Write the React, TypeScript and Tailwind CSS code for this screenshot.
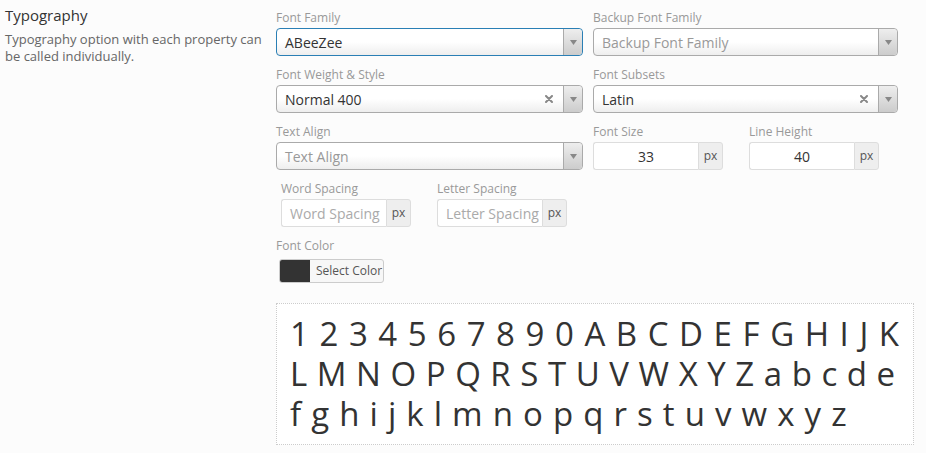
import React from "react";

const ui = { fontFamily: '"Open Sans", "Liberation Sans", sans-serif' };

function Arrow() {
  return (
    <div className="flex h-full w-[19px] items-center justify-center rounded-r-[4px] border-l border-[#aaa] bg-gradient-to-t from-[#ccc] to-[#eee]">
      <svg width="7" height="5" viewBox="0 0 7 5">
        <path d="M0 0 L7 0 L3.5 5 Z" fill="#888" />
      </svg>
    </div>
  );
}

function Clear() {
  return (
    <svg width="8" height="8" viewBox="0 0 8 8" className="mr-[10px]">
      <path d="M1 1 L7 7 M7 1 L1 7" stroke="#888" strokeWidth="2" strokeLinecap="round" />
    </svg>
  );
}

function Select({
  value,
  placeholder,
  clear,
  focus,
}: {
  value?: string;
  placeholder?: string;
  clear?: boolean;
  focus?: boolean;
}) {
  return (
    <div
      className={`flex h-[28px] items-center rounded-[4px] border bg-gradient-to-t from-[#eee] via-white via-50% to-white ${
        focus ? "border-[#2a7fb5]" : "border-[#aaa]"
      }`}
    >
      <div className={`flex-1 pl-[8px] text-[14px] ${value ? "text-[#333]" : "text-[#999]"}`}>
        {value ?? placeholder}
      </div>
      {clear && <Clear />}
      <Arrow />
    </div>
  );
}

function Label({ children, className = "" }: { children: React.ReactNode; className?: string }) {
  return <div className={`mb-[2px] h-[17px] text-[12px] leading-[17px] text-[#999] ${className}`}>{children}</div>;
}

function PxInput({ value, placeholder }: { value?: string; placeholder?: string }) {
  return (
    <div className="flex h-[28px] w-[130px]">
      <div
        className={`flex flex-1 items-center overflow-hidden whitespace-nowrap rounded-l-[3px] border border-r-0 border-[#ddd] bg-white text-[14px] ${
          value ? "justify-center text-[#333]" : "pl-[8px] text-[#aaa]"
        }`}
      >
        {value ?? placeholder}
      </div>
      <div className="flex w-[25px] items-center justify-center rounded-r-[3px] border border-[#ddd] bg-[#eee] text-[12px] text-[#555]">
        px
      </div>
    </div>
  );
}

export default function App() {
  return (
    <div className="min-h-[453px] w-[926px] bg-[#fcfcfc]" style={ui}>
      <div className="flex">
        <div className="w-[276px] pl-[5px] pt-[4px]">
          <div className="text-[15px] leading-[22px] text-[#333]">Typography</div>
          <div className="mt-[5px] w-[262px] text-[13px] leading-[17px] text-[#666]">
            Typography option with each property can be called individually.
          </div>
        </div>
        <div className="w-[638px] pt-[9px]">
          <div className="grid grid-cols-[307px_305px] gap-x-[10px] gap-y-[10px]">
            <div>
              <Label>Font Family</Label>
              <Select value="ABeeZee" focus />
            </div>
            <div>
              <Label>Backup Font Family</Label>
              <Select placeholder="Backup Font Family" />
            </div>
            <div>
              <Label>Font Weight &amp; Style</Label>
              <Select value="Normal 400" clear />
            </div>
            <div>
              <Label>Font Subsets</Label>
              <Select value="Latin" clear />
            </div>
            <div>
              <Label>Text Align</Label>
              <Select placeholder="Text Align" />
            </div>
            <div className="flex gap-[26px]">
              <div>
                <Label>Font Size</Label>
                <PxInput value="33" />
              </div>
              <div>
                <Label>Line Height</Label>
                <PxInput value="40" />
              </div>
            </div>
          </div>
          <div className="mt-[10px] flex gap-[26px] pl-[5px]">
            <div>
              <Label>Word Spacing</Label>
              <PxInput placeholder="Word Spacing" />
            </div>
            <div>
              <Label>Letter Spacing</Label>
              <PxInput placeholder="Letter Spacing" />
            </div>
          </div>
          <div className="mt-[10px]">
            <Label>Font Color</Label>
            <div className="ml-[3px] mt-[5px] flex h-[24px] w-[105px] overflow-hidden rounded-[3px] border border-[#ccc] bg-[#f7f7f7]">
              <div className="w-[30px] bg-[#333]" />
              <div className="flex flex-1 items-center pl-[6px] text-[12px] text-[#555]">Select Color</div>
            </div>
          </div>
          <div className="mt-[20px] h-[142px] border border-dotted border-[#ccc] bg-white px-[13px] py-[10px] text-[33px] leading-[40px] text-[#333]">
            <div className="whitespace-nowrap [word-spacing:2px]">1 2 3 4 5 6 7 8 9 0 A B C D E F G H I J K</div>
            <div className="whitespace-nowrap [word-spacing:1px]">L M N O P Q R S T U V W X Y Z a b c d e</div>
            <div className="whitespace-nowrap [word-spacing:1.5px]">f g h i j k l m n o p q r s t u v w x y z</div>
          </div>
        </div>
      </div>
    </div>
  );
}
